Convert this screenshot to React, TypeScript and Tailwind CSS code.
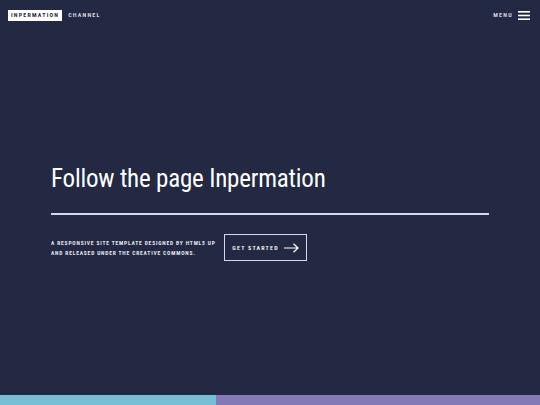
import React from 'react';

function Header() {
  return (
    <header className="flex h-[30px] items-center justify-between pl-[8px] pr-[10px]">
      <a className="flex items-center gap-[6px] text-[6px] font-bold uppercase tracking-[0.2em] text-white">
        <span className="bg-white px-[3px] py-[2.5px] leading-none text-[#242943]">Inpermation</span>
        <span className="leading-none text-[#d4d6e4]">Channel</span>
      </a>
      <button className="flex items-center gap-[5px] text-[6px] font-bold uppercase tracking-[0.22em] text-[#d4d6e4]">
        <span className="leading-none">Menu</span>
        <svg width="12" height="9" viewBox="0 0 12 9" className="text-white">
          <rect x="0" y="0" width="12" height="1.6" fill="currentColor" />
          <rect x="0" y="3.7" width="12" height="1.6" fill="currentColor" />
          <rect x="0" y="7.4" width="12" height="1.6" fill="currentColor" />
        </svg>
      </button>
    </header>
  );
}

function Banner() {
  return (
    <section className="flex-1 px-[51px] pt-[134px]">
      <h1 className="border-b-2 border-[#d5d7ea] pb-[19px] text-[25px] font-normal leading-[30px] tracking-[-0.2px] text-white">
        Follow the page Inpermation
      </h1>
      <div className="mt-[19px] flex items-center">
        <p className="w-[173px] whitespace-nowrap text-[5.5px] font-bold uppercase leading-[10px] tracking-[0.15em] text-[#e6e7f0]">
          A responsive site template designed by HTML5 UP
          <br />
          and released under the Creative Commons.
        </p>
        <button className="flex h-[27px] w-[83px] items-center justify-center gap-[5px] border-[1.5px] border-[#d5d7ea] text-[6px] font-semibold uppercase tracking-[0.2em] text-white">
          <span className="leading-none">Get Started</span>
          <svg width="15" height="10" viewBox="0 0 15 10" fill="none" stroke="currentColor" strokeWidth="1.2">
            <path d="M0 5h14M9.5 0.7 14 5l-4.5 4.3" />
          </svg>
        </button>
      </div>
    </section>
  );
}

export default function App() {
  return (
    <div className="flex h-[405px] w-full flex-col bg-[#242943] font-['Roboto_Condensed','Open_Sans',sans-serif]">
      <Header />
      <Banner />
      <div className="flex h-[10px]">
        <div className="w-[216px] bg-[#78bfd6]" />
        <div className="flex-1 bg-[#8379b6]" />
      </div>
    </div>
  );
}
